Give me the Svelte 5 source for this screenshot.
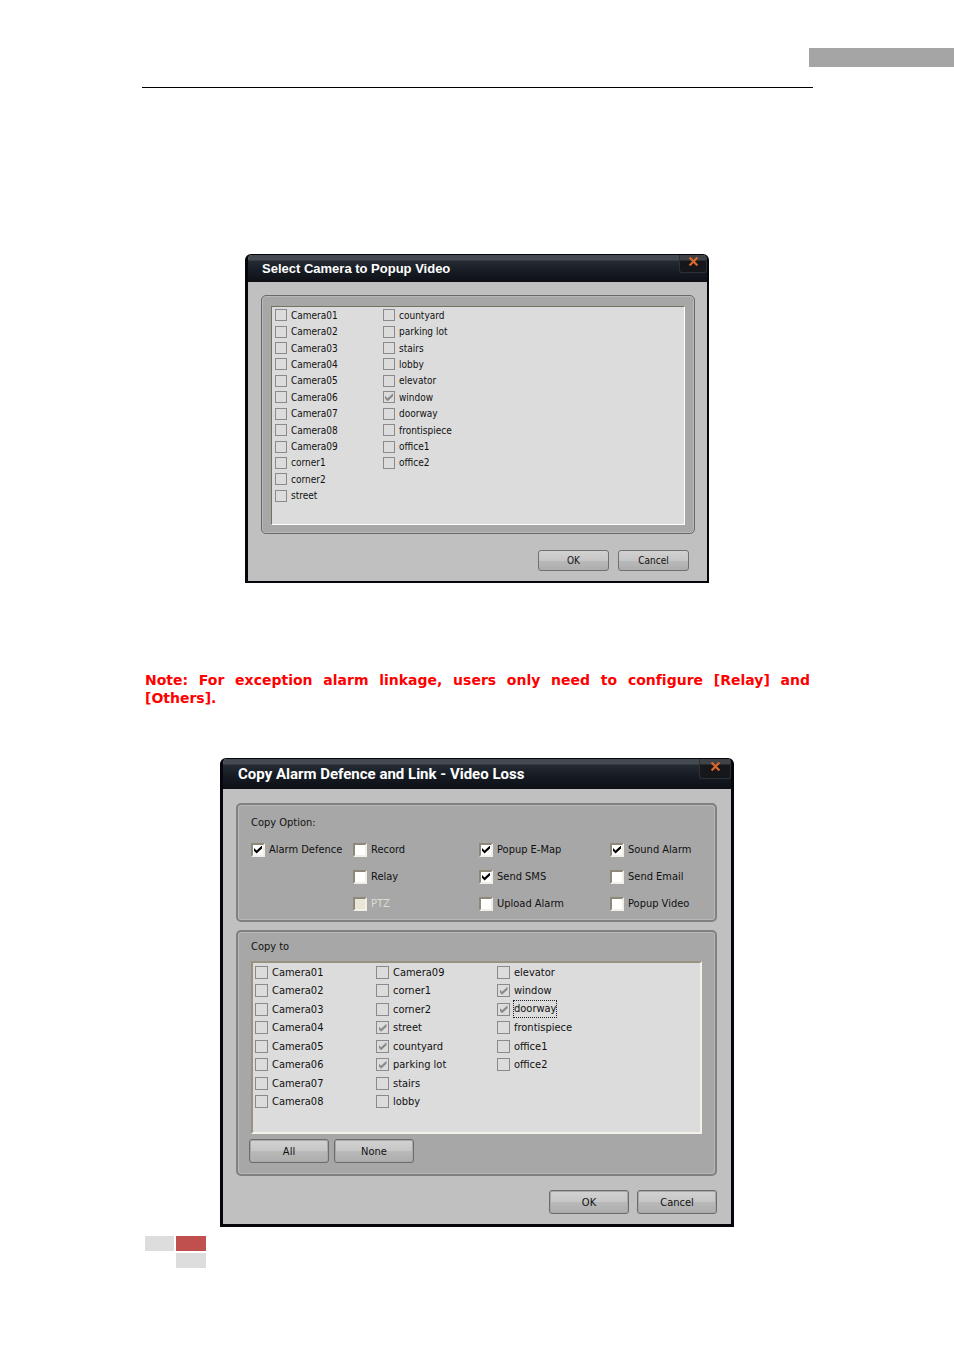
<script lang="ts">
    interface Camera {
        name: string;
        checked?: boolean;
        focused?: boolean;
    }

    interface Option extends Camera {
        area: string;
        disabled?: boolean;
    }

    const names = [
        'Camera01', 'Camera02', 'Camera03', 'Camera04', 'Camera05', 'Camera06',
        'Camera07', 'Camera08', 'Camera09', 'corner1', 'corner2', 'street',
        'countyard', 'parking lot', 'stairs', 'lobby', 'elevator', 'window',
        'doorway', 'frontispiece', 'office1', 'office2'
    ];
    const linked = ['street', 'countyard', 'parking lot', 'window', 'doorway'];

    let popupCameras: Camera[] = $state(
        names.map((name) => ({ name, checked: name === 'window' }))
    );

    let copyCameras: Camera[] = $state(
        names.map((name) => ({
            name,
            checked: linked.includes(name),
            focused: name === 'doorway'
        }))
    );

    let options: Option[] = $state([
        { name: 'Alarm Defence', area: 'defence', checked: true },
        { name: 'Record', area: 'record', checked: false },
        { name: 'Popup E-Map', area: 'emap', checked: true },
        { name: 'Sound Alarm', area: 'sound', checked: true },
        { name: 'Relay', area: 'relay', checked: false },
        { name: 'Send SMS', area: 'sms', checked: true },
        { name: 'Send Email', area: 'email', checked: false },
        { name: 'PTZ', area: 'ptz', checked: false, disabled: true },
        { name: 'Upload Alarm', area: 'upload', checked: false },
        { name: 'Popup Video', area: 'video', checked: false }
    ]);

    function setAll(value: boolean) {
        copyCameras.forEach((camera) => (camera.checked = value));
    }
</script>

{#snippet titleBar(title: string)}
    <header class="title-bar">
        <h2>{title}</h2>
        <button class="close" type="button" aria-label="Close">
            <svg viewBox="0 0 9 8" width="11" height="9">
                <path d="M1 0.5 L8 7.5 M8 0.5 L1 7.5" stroke="#d9682b" stroke-width="2" />
            </svg>
        </button>
    </header>
{/snippet}

{#snippet cameraList(cameras: Camera[])}
    <div class="camera-list">
        {#each cameras as camera (camera.name)}
            <label class="camera">
                <input type="checkbox" bind:checked={camera.checked} />
                <span class:focused={camera.focused}>{camera.name}</span>
            </label>
        {/each}
    </div>
{/snippet}

<div class="tab"></div>
<hr />

<main>
    <section class="dialog small">
        {@render titleBar('Select Camera to Popup Video')}
        <div class="body">
            <div class="group">
                {@render cameraList(popupCameras)}
            </div>
            <div class="actions">
                <button type="button">OK</button>
                <button type="button">Cancel</button>
            </div>
        </div>
    </section>

    <p class="note">
        Note: For exception alarm linkage, users only need to configure [Relay] and [Others].
    </p>

    <section class="dialog large">
        {@render titleBar('Copy Alarm Defence and Link - Video Loss')}
        <div class="body">
            <div class="group">
                <h3>Copy Option:</h3>
                <div class="options">
                    {#each options as option (option.name)}
                        <label class="option {option.area}" class:disabled={option.disabled}>
                            <input type="checkbox" bind:checked={option.checked} disabled={option.disabled} />
                            <span>{option.name}</span>
                        </label>
                    {/each}
                </div>
            </div>
            <div class="group copy-to">
                <h3>Copy to</h3>
                {@render cameraList(copyCameras)}
                <div class="selection">
                    <button type="button" onclick={() => setAll(true)}>All</button>
                    <button type="button" onclick={() => setAll(false)}>None</button>
                </div>
            </div>
            <div class="actions">
                <button type="button">OK</button>
                <button type="button">Cancel</button>
            </div>
        </div>
    </section>

    <div class="blocks">
        <i></i>
        <i class="red"></i>
        <i class="last"></i>
    </div>
</main>

<style>
    :global(body) {
        background: #fff;
    }

    .tab {
        width: 145px;
        height: 19px;
        margin: 48px 0 0 auto;
        background: #a5a5a5;
    }

    hr {
        height: 1px;
        margin: 20px 141px 0 142px;
        border: 0;
        background: #000;
    }

    main {
        padding: 166px 142px 80px;
    }

    .dialog {
        box-sizing: border-box;
        width: 100%;
        margin: 0 auto;
        overflow: hidden;
        border: solid #05060b;
        border-radius: 6px 6px 0 0;
        background: #c0c0c0;
        color: #111;
        font-family: 'DejaVu Sans Condensed', 'DejaVu Sans', sans-serif;
    }

    .small {
        max-width: 464px;
        border-width: 1px 2px 2px 3px;
        font-size: 10px;
    }

    .large {
        max-width: 514px;
        border-width: 1px 3px 3px 3px;
        font-size: 11px;
    }

    .title-bar {
        display: flex;
        align-items: flex-start;
        justify-content: space-between;
        height: 27px;
        padding-left: 14px;
        background: linear-gradient(#444b50 0 5px, #252b32 6px, #151a22 18px, #0e1015);
    }

    .large .title-bar {
        height: 30px;
        padding-left: 15px;
    }

    h2 {
        margin: 0;
        color: #fff;
        font: bold 13px/28px 'Liberation Sans', Arial, sans-serif;
    }

    .large h2 {
        font: bold 15px/30px Roboto, 'Liberation Sans', sans-serif;
    }

    .close {
        display: flex;
        align-items: center;
        justify-content: center;
        width: 28px;
        height: 18px;
        padding: 0 0 4px;
        border: solid #2c3136;
        border-width: 0 1px 1px;
        border-radius: 0 0 3px 3px;
        background: linear-gradient(#3f4347 0 5px, #15171a 6px);
    }

    .large .close {
        width: 32px;
        height: 20px;
    }

    .body {
        padding: 13px 12px 10px 13px;
    }

    .large .body {
        padding: 14px 14px 10px 13px;
    }

    .group {
        padding: 10px 9px 8px;
        border: 1px solid #696969;
        border-radius: 5px;
        background: #a7a7a7;
        box-shadow: inset 0 0 0 1px #b8b8b8;
    }

    .large .group {
        padding: 8px 13px 3px;
        border-width: 2px;
        border-color: #808080;
    }

    .large .copy-to {
        margin-top: 8px;
        padding: 5px 13px 11px;
    }

    h3 {
        margin: 0;
        font-size: 11px;
        font-weight: normal;
        line-height: 20px;
    }

    label {
        display: flex;
        align-items: center;
        gap: 4px;
        white-space: nowrap;
    }

    input {
        display: grid;
        flex: none;
        place-content: center;
        box-sizing: border-box;
        width: 12px;
        height: 12px;
        margin: 0;
        appearance: none;
        border: 1px solid #8a8a8a;
        background: #dcdcdc;
        color: #8a8a8a;
    }

    input:checked::before {
        width: 8px;
        height: 8px;
        background: currentColor;
        clip-path: polygon(0 30%, 32% 62%, 100% 0, 100% 36%, 32% 100%, 0 66%);
        content: '';
    }

    .camera-list {
        display: grid;
        grid-auto-flow: column;
        grid-auto-columns: 108px;
        grid-template-rows: repeat(12, 1fr);
        box-sizing: border-box;
        height: 219px;
        padding: 0 3px 20px;
        border: 1px solid #fff;
        border-top-color: #77715f;
        border-left-color: #77715f;
        background: #dcdcdc;
    }

    .large .camera-list {
        grid-auto-columns: 121px;
        grid-template-rows: repeat(8, 1fr);
        height: 173px;
        margin-top: 4px;
        padding: 0 2px 21px;
        border-width: 2px;
        border-color: #99927f #f3f1e8 #f3f1e8 #99927f;
    }

    .large .camera input {
        width: 13px;
        height: 13px;
    }

    .camera .focused {
        padding: 1px 0 2px;
        outline: 1px dotted #222;
    }

    .options {
        display: grid;
        grid-template-areas:
            'defence record emap sound'
            '. relay sms email'
            '. ptz upload video';
        grid-template-columns: 102px 126px 131px 1fr;
        grid-template-rows: repeat(3, 27px);
        margin-top: 3px;
    }

    .option input {
        width: 14px;
        height: 14px;
        border: 2px solid #f1efe6;
        border-top-color: #8d8878;
        border-left-color: #8d8878;
        background: #fff;
        color: #000;
    }

    .disabled {
        color: #dedbd0;
    }

    .disabled input {
        background: #e9e6d8;
    }

    .defence { grid-area: defence; }
    .record { grid-area: record; }
    .emap { grid-area: emap; }
    .sound { grid-area: sound; }
    .relay { grid-area: relay; }
    .sms { grid-area: sms; }
    .email { grid-area: email; }
    .ptz { grid-area: ptz; }
    .upload { grid-area: upload; }
    .video { grid-area: video; }

    .actions,
    .selection {
        display: flex;
    }

    .actions {
        gap: 9px;
        justify-content: flex-end;
        padding: 16px 6px 0 0;
    }

    .large .actions {
        gap: 8px;
        padding: 14px 0 0;
    }

    .selection {
        gap: 5px;
        margin: 5px 0 0 -2px;
    }

    .actions button,
    .selection button {
        width: 71px;
        height: 21px;
        padding: 0;
        border: 1px solid #707070;
        border-radius: 3px;
        background: linear-gradient(#d2d2d2, #c6c6c6 50%, #b9b9b9 51%, #adadad);
        color: #111;
        font: inherit;
    }

    .large .actions button,
    .large .selection button {
        width: 80px;
        height: 24px;
        border-color: #6c6c6c;
        box-shadow: inset 0 0 0 1px #a8a8a8;
    }

    .note {
        margin: 88px 2px 51px 3px;
        color: #f00;
        font: bold 14px/18px Verdana, 'DejaVu Sans', sans-serif;
        font-variant-ligatures: none;
        text-align: justify;
    }

    .blocks {
        display: grid;
        grid-template-columns: 29px 30px;
        grid-template-rows: 15px 15px;
        gap: 2px;
        margin: 9px 3px 0;
    }

    .blocks i {
        background: #ddd;
    }

    .blocks .red {
        background: #c0504d;
    }

    .blocks .last {
        grid-column: 2;
    }
</style>
